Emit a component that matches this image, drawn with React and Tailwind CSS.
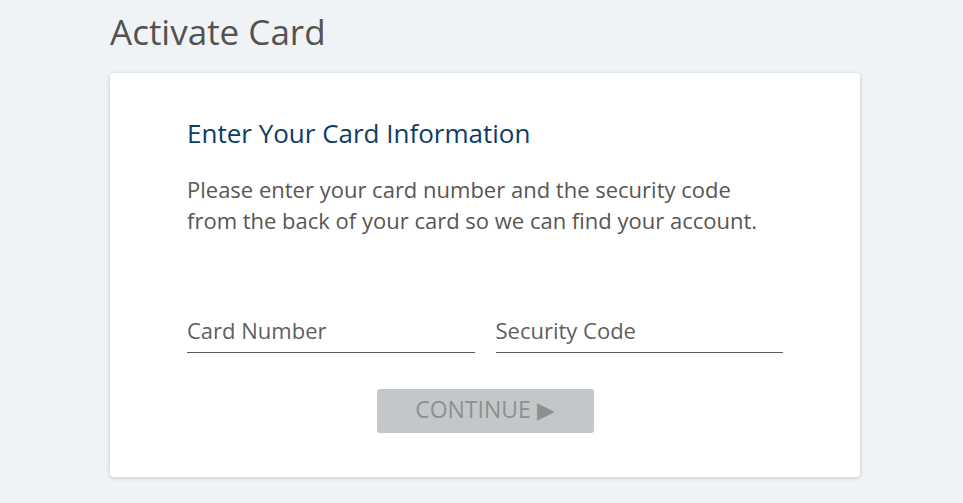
import React, { useState } from "react";

export default function App() {
  const [cardNumber, setCardNumber] = useState("");
  const [securityCode, setSecurityCode] = useState("");
  const ready = cardNumber.trim() && securityCode.trim();

  return (
    <div
      className="min-h-[503px] w-full bg-[#eff3f6] pt-[10px] pb-[26px]"
      style={{ fontFamily: "'Open Sans', Lato, sans-serif" }}
    >
      <div className="ml-[110px] w-[750px]">
        <h1 className="text-[35px] leading-[44px] text-[#54524f] font-normal">Activate Card</h1>

        <div className="mt-[19px] bg-white rounded-[4px] shadow-[0_1px_4px_rgba(0,0,0,0.18)] px-[77px] pt-[42px] pb-[44px]">
          <h2 className="text-[26px] leading-[36px] text-[#0d3c66] font-normal">Enter Your Card Information</h2>
          <p className="mt-[23px] w-[580px] text-[22px] leading-[31px] text-[#5a5652]">
            Please enter your card number and the security code from the back of your card so we can find your account.
          </p>

          <div className="mt-[79px] flex gap-[21px]">
            <input
              value={cardNumber}
              onChange={(e) => setCardNumber(e.target.value)}
              placeholder="Card Number"
              className="flex-1 min-w-0 border-b border-[#5c5c5c] pb-[7px] text-[22px] leading-[30px] text-[#333] placeholder:text-[#5f5f5f] outline-none bg-transparent"
            />
            <input
              value={securityCode}
              onChange={(e) => setSecurityCode(e.target.value)}
              placeholder="Security Code"
              className="flex-1 min-w-0 border-b border-[#5c5c5c] pb-[7px] text-[22px] leading-[30px] text-[#333] placeholder:text-[#5f5f5f] outline-none bg-transparent"
            />
          </div>

          <div className="mt-[36px] flex justify-center">
            <button
              disabled={!ready}
              className="w-[217px] h-[44px] pb-[4px] rounded-[3px] bg-[#c3c7ca] text-[23px] text-[#8f8f8f] disabled:cursor-default"
            >
              CONTINUE ▶
            </button>
          </div>
        </div>
      </div>
    </div>
  );
}
